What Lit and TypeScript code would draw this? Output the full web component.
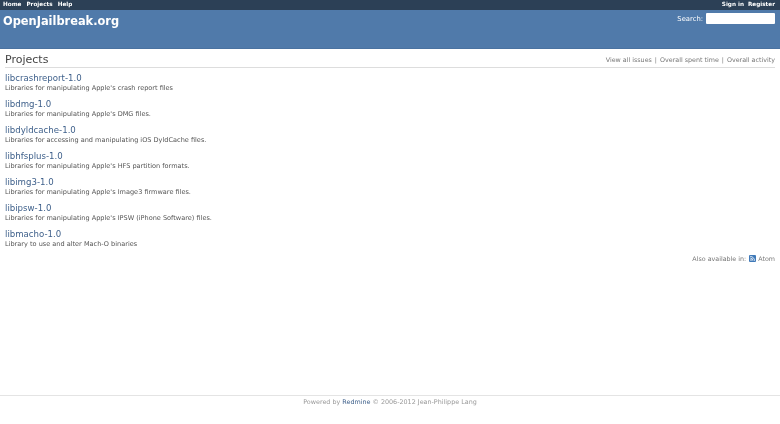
import { LitElement, html, css } from "lit";
import { customElement } from "lit/decorators.js";

const projects = [
  ["libcrashreport-1.0", "Libraries for manipulating Apple's crash report files"],
  ["libdmg-1.0", "Libraries for manipulating Apple's DMG files."],
  ["libdyldcache-1.0", "Libraries for accessing and manipulating iOS DyldCache files."],
  ["libhfsplus-1.0", "Libraries for manipulating Apple's HFS partition formats."],
  ["libimg3-1.0", "Libraries for manipulating Apple's Image3 firmware files."],
  ["libipsw-1.0", "Libraries for manipulating Apple's IPSW (iPhone Software) files."],
  ["libmacho-1.0", "Library to use and alter Mach-O binaries"],
];

@customElement("app-root")
export class AppRoot extends LitElement {
  static styles = css`
    :host {
      display: flex;
      flex-direction: column;
      height: 424px;
      width: 780px;
      overflow: hidden;
      background: #fff;
      font-family: "DejaVu Sans", Verdana, sans-serif;
      color: #555;
      filter: blur(0.35px);
    }
    a { color: inherit; text-decoration: none; }
    .top {
      height: 10px;
      background: #2c4056;
      color: #fff;
      font-weight: 700;
      font-size: 5.7px;
      line-height: 9px;
      display: flex;
      justify-content: space-between;
      padding: 0 5px 0 3px;
    }
    .top nav { display: flex; gap: 5px; }
    .top nav.account { gap: 4px; }
    .header {
      height: 39px;
      background: #507aaa;
      box-shadow: inset 0 -1px 0 #4a72a0;
      color: #fff;
      display: flex;
      justify-content: space-between;
      align-items: flex-start;
      padding: 0 5px 0 3px;
    }
    .brand { font-size: 11.4px; font-weight: 700; line-height: 23px; }
    .search { display: flex; align-items: center; gap: 3px; margin-top: 3px; font-size: 6.8px; }
    .search span { display: block; }
    .search .input { width: 69px; height: 11px; background: #fff; border-radius: 1px; }
    .main { flex: 1; padding: 0 5px; display: flex; flex-direction: column; }
    .head {
      display: flex;
      justify-content: space-between;
      align-items: center;
      box-sizing: border-box;
      height: 19px;
      padding-top: 2px;
      border-bottom: 1px solid #ddd;
    }
    h2 { margin: 0; font-size: 11px; font-weight: 400; color: #444; }
    .links { font-size: 6.35px; color: #777; display: flex; gap: 3px; }
    .list { margin-top: 4px; }
    .project { height: 26px; }
    .project a { display: block; color: #3d5f8a; font-size: 8.6px; line-height: 13px; }
    .project div { font-size: 6.55px; line-height: 8px; margin-top: -1px; color: #555; }
    .other {
      display: flex; justify-content: flex-end; align-items: center; gap: 2px;
      font-size: 6.35px; color: #777; height: 12px; margin-top: -2px;
    }
    .other svg { display: block; margin-left: 1px; }
    .footer {
      height: 29px;
      box-sizing: border-box;
      border-top: 1px solid #e4e4e4;
      text-align: center;
      font-size: 6.4px;
      color: #999;
      padding-top: 2px;
      line-height: 9px;
    }
    .footer a { color: #3d5f8a; }
  `;

  render() {
    return html`
      <div class="top">
        <nav><a>Home</a><a>Projects</a><a>Help</a></nav>
        <nav class="account"><a>Sign in</a><a>Register</a></nav>
      </div>
      <div class="header">
        <div class="brand">OpenJailbreak.org</div>
        <div class="search"><span>Search:</span><div class="input"></div></div>
      </div>
      <div class="main">
        <div class="head">
          <h2>Projects</h2>
          <div class="links">
            <a>View all issues</a><span>|</span><a>Overall spent time</a><span>|</span><a>Overall activity</a>
          </div>
        </div>
        <div class="list">
          ${projects.map(([n, d]) => html`<div class="project"><a>${n}</a><div>${d}</div></div>`)}
        </div>
        <div class="other">
          <span>Also available in:</span>
          <svg width="7" height="7" viewBox="0 0 7 7">
            <rect width="7" height="7" rx="1" fill="#3f79b8"></rect>
            <circle cx="2" cy="5" r="0.8" fill="#fff"></circle>
            <path d="M1.2 3a2.8 2.8 0 0 1 2.8 2.8M1.2 1.4a4.4 4.4 0 0 1 4.4 4.4" fill="none" stroke="#fff" stroke-width="0.8"></path>
          </svg>
          <a>Atom</a>
        </div>
      </div>
      <div class="footer">Powered by <a>Redmine</a> © 2006-2012 Jean-Philippe Lang</div>
    `;
  }
}
